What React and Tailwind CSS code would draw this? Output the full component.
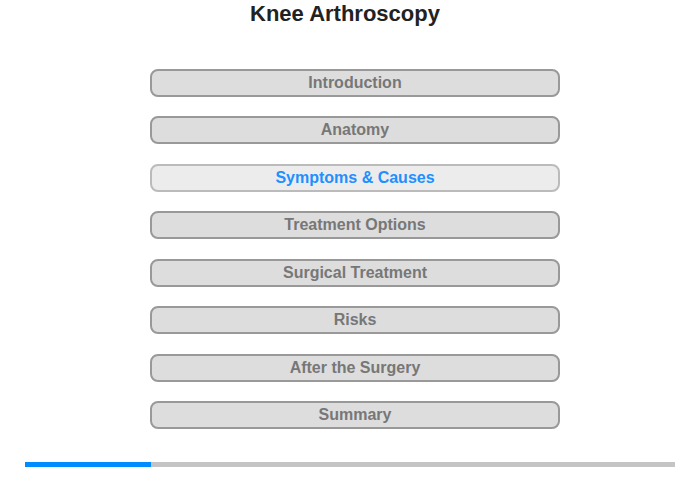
import React from "react";

const items = [
  "Introduction",
  "Anatomy",
  "Symptoms & Causes",
  "Treatment Options",
  "Surgical Treatment",
  "Risks",
  "After the Surgery",
  "Summary",
];

export default function App() {
  return (
    <div
      className="w-[700px] h-[480px] bg-white flex flex-col items-center"
      style={{ fontFamily: '"Liberation Sans", Arial, sans-serif' }}
    >
      <div className="pt-[1px] h-[69px] mr-[10px] text-[22px] leading-[26px] font-bold text-[#222]">
        Knee Arthroscopy
      </div>
      <div className="flex flex-col gap-[19.43px] w-[410px] ml-[10px]">
        {items.map((it, i) =>
          i === 2 ? (
            <div
              key={it}
              className="h-[28px] rounded-[8px] border-2 border-[#bbbbbb] bg-[#ececec] flex items-center justify-center text-[16px] font-bold text-[#1e90ff]"
            >
              {it}
            </div>
          ) : (
            <div
              key={it}
              className="h-[28px] rounded-[8px] border-2 border-[#999999] bg-[#dddddd] flex items-center justify-center text-[16px] font-bold text-[#777777]"
            >
              {it}
            </div>
          )
        )}
      </div>
      <div className="mt-[33px] w-[650px] h-[5px] bg-[#c4c4c4] flex">
        <div className="w-[126px] h-full bg-[#008bff]" />
      </div>
    </div>
  );
}
